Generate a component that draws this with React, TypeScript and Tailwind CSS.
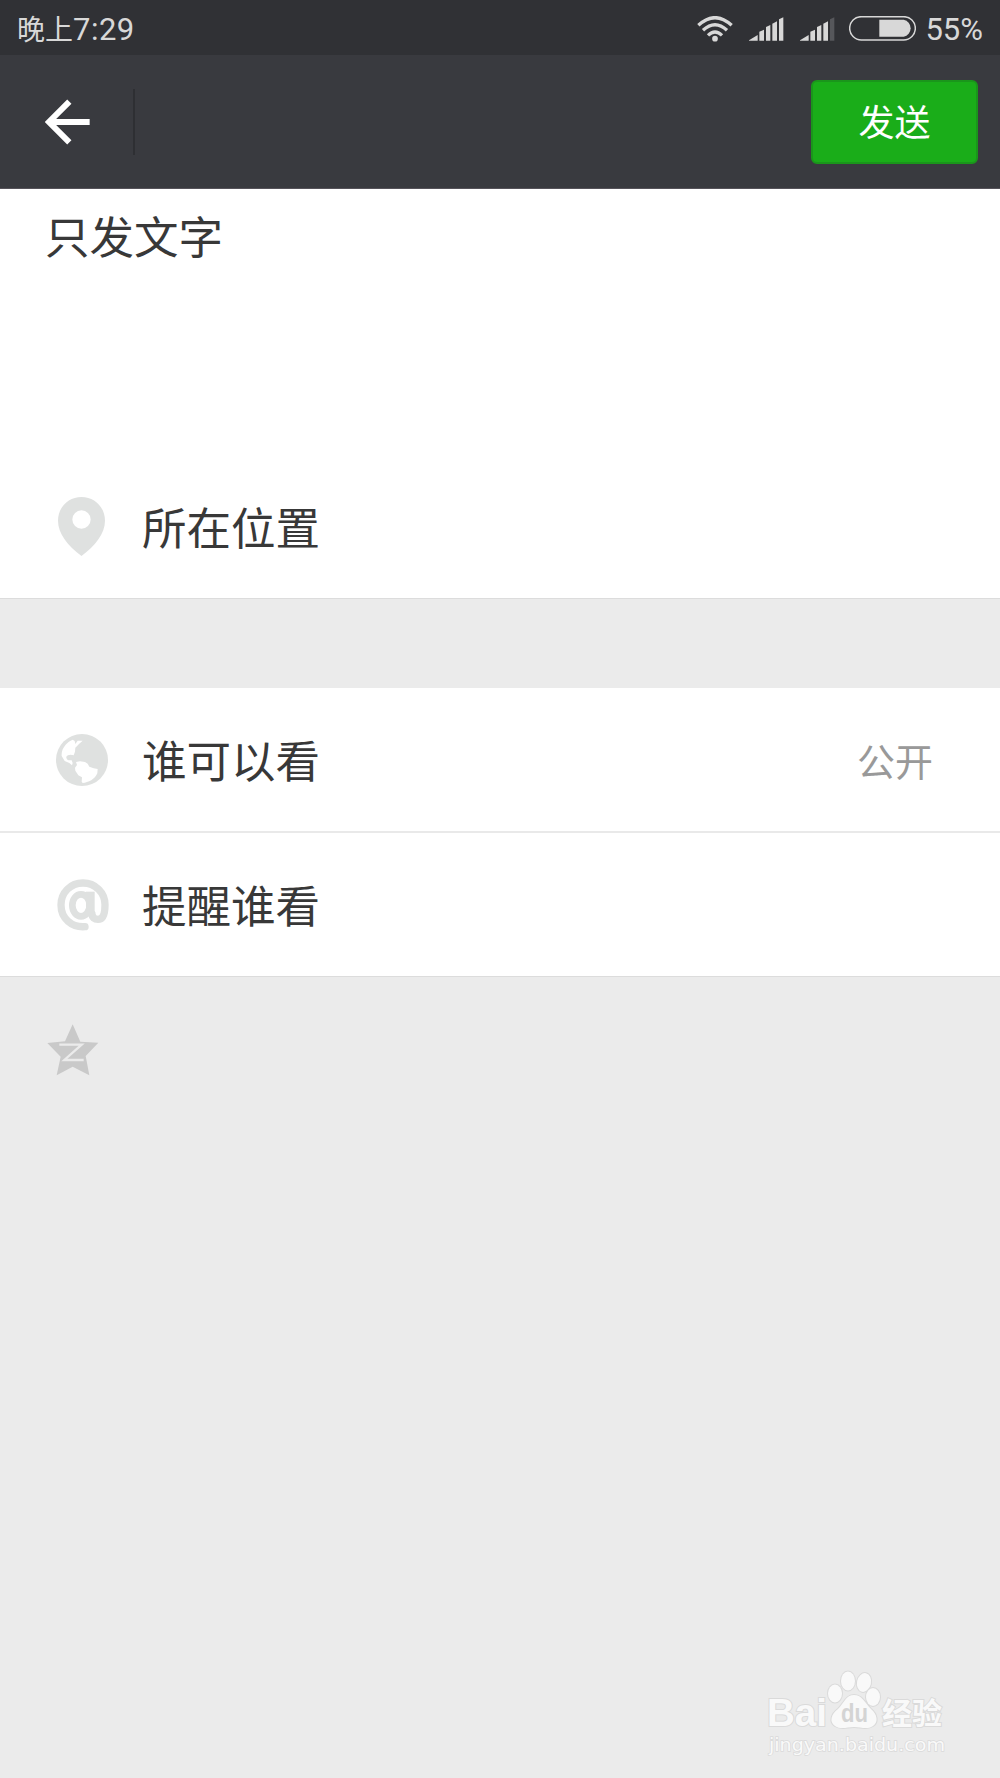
import type { ReactNode } from "react";

interface RowProps {
  icon: ReactNode;
  label: string;
  value?: string;
}

function WifiIcon() {
  return (
    <svg width="36" height="26" viewBox="0 0 108 78" fill="none" stroke="#d8d8d8" strokeWidth="10">
      <path d="M4 28Q54 -18 104 28" />
      <path d="M18 43Q54 10 90 43" />
      <path d="M33 58Q54 38 75 58" />
      <circle cx="54" cy="68" r="8.5" fill="#d8d8d8" stroke="none" />
    </svg>
  );
}

function SignalIcon({ weak = false }: { weak?: boolean }) {
  return (
    <svg width="35" height="24" viewBox="0 0 105 72" fill="#d8d8d8">
      <path d="M0 70L26 54V71H0z" />
      <path d="M31 44L45 38V71H31z" />
      <path d="M51 30L64 24V71H51z" />
      <path d="M70 20L84 13V71H70z" />
      <path d="M90 7L103 1V71H90z" fill={weak ? "#56575b" : "#d8d8d8"} />
    </svg>
  );
}

function BatteryIcon() {
  return (
    <svg width="67" height="25" viewBox="0 0 201 75">
      <rect x="2" y="2" width="197" height="70" rx="35" fill="none" stroke="#d8d8d8" strokeWidth="4.5" />
      <path d="M91 11H164A26 26 0 0 1 164 62H91z" fill="#d8d8d8" />
    </svg>
  );
}

function PinIcon() {
  return (
    <svg width="47" height="59" viewBox="0 0 141 177">
      <path
        fillRule="evenodd"
        fill="#dfe1e0"
        d="M70.500 0C31 0 0 31 0 71C0 109 29 146 70.500 177C112 146 141 109 141 71C141 31 110 0 70.500 0ZM70.500 40A27.500 27.500 0 1 1 70.500 95A27.500 27.500 0 1 1 70.500 40Z"
      />
    </svg>
  );
}

function GlobeIcon() {
  return (
    <svg width="52" height="52" viewBox="0 0 156 156">
      <circle cx="78" cy="78" r="78" fill="#dfe1e0" />
      <g fill="#fff">
        <path d="M50 17L56 21L58 30L65 20H80L69 30L58 41L57 53L53 64C44 60 34 62 31 68C30 73 34 78 38 79H47L50 87L48 94L40 87L26 81L17 66C16 53 20 43 29 32C35 25 42 20 50 17Z" />
        <path d="M42 67L50 65L55 73L56 82L48 78Z" fill="#dfe1e0" />
        <path d="M60 84L72 82L87 84L95 89L100 98L113 103L125 105L124 118C117 136 97 146 80 147L77 143L78 130L67 124L58 110L57 101L63 93Z" />
      </g>
    </svg>
  );
}

function MentionIcon() {
  return (
    <svg width="52" height="52" viewBox="0 0 156 156" fill="none" stroke="#dfe1e0" strokeLinecap="round">
      <path strokeWidth="22" d="M84 143C44 146 12 118 12 78C12 40 41 12 78 12C115 12 144 41 144 77C144 107 136 121 123 121C112 121 105 115 105 105" />
      <path strokeWidth="26" strokeLinecap="butt" d="M100 38V112" />
      <ellipse cx="72" cy="79" rx="26" ry="33" strokeWidth="20" />
    </svg>
  );
}

function QzoneIcon() {
  return (
    <svg width="52" height="52" viewBox="0 0 156 156">
      <path fill="#c9c9c9" d="M77 1L100 53L154 56L116 96L127 154L77 128L29 154L41 98L1 57L54 52Z" />
      <path d="M37 62H104L52 108H110" fill="none" stroke="#ebebeb" strokeWidth="7" />
    </svg>
  );
}

function Row({ icon, label, value }: RowProps) {
  return (
    <div className="flex h-[143px] items-center bg-white pr-[67px] pl-14">
      <div className="flex w-[86px] shrink-0">{icon}</div>
      <span className="flex-1 text-[44.5px] leading-none">{label}</span>
      {value && <span className="text-[38px] leading-none text-[#999]">{value}</span>}
    </div>
  );
}

function Watermark() {
  return (
    <svg
      className="absolute right-[50px] bottom-[16px]"
      width="184"
      height="96"
      viewBox="0 0 184 96"
      fill="#f9f9f9"
      stroke="#dadada"
      strokeWidth="2"
      paintOrder="stroke"
    >
      <text x="1" y="60" fontSize="38" fontWeight="bold" textLength="60" lengthAdjust="spacingAndGlyphs" fontFamily="'Liberation Sans', sans-serif">
        Bai
      </text>
      <ellipse cx="69" cy="27.500" rx="7" ry="9" />
      <ellipse cx="82" cy="15" rx="7" ry="9.500" />
      <ellipse cx="98" cy="16.500" rx="7" ry="9.500" transform="rotate(12 98 16.500)" />
      <ellipse cx="107" cy="31" rx="7" ry="9" />
      <path d="M88 29C96 29 99 37 105 43C111 48 113 56 107 60C101 64 95 61 88 61C81 61 75 64 69 60C63 56 65 48 72 43C78 37 80 29 88 29Z" />
      <text x="75" y="56" fontSize="25" fontWeight="bold" fill="#d4d4d4" stroke="none" textLength="27" lengthAdjust="spacingAndGlyphs" fontFamily="'Liberation Sans', sans-serif">
        du
      </text>
      <text x="116" y="58" fontSize="30" fontWeight="bold" textLength="60" lengthAdjust="spacingAndGlyphs" fontFamily="'Noto Sans CJK SC', sans-serif">
        经验
      </text>
      <text x="3" y="85" fontSize="18.500" strokeWidth="1.500" textLength="176" lengthAdjust="spacingAndGlyphs" fontFamily="'DejaVu Sans', sans-serif">
        jingyan.baidu.com
      </text>
    </svg>
  );
}

export default function App() {
  return (
    <div className="relative flex h-[1778px] w-[1000px] flex-col overflow-hidden bg-[#ebebeb] font-['Noto_Sans_CJK_SC',sans-serif] text-[#383838]">
      {/* Status bar */}
      <div className="flex h-[55px] shrink-0 items-center justify-between bg-[#303135] pt-0.5 pr-[17px] pl-[17px] text-[#d8d8d8]">
        <div className="flex items-baseline pt-px leading-none">
          <span className="text-[28px] leading-none">晚上</span>
          <span className="font-[Roboto,sans-serif] text-[31px] leading-none tracking-[0.5px]">7:29</span>
        </div>
        <div className="flex items-center">
          <WifiIcon />
          <div className="ml-4 flex gap-4">
            <SignalIcon />
            <SignalIcon weak />
          </div>
          <div className="mr-[9px] ml-[14px]">
            <BatteryIcon />
          </div>
          <span className="pt-px font-[Roboto,sans-serif] text-[31px] leading-none">55%</span>
        </div>
      </div>

      {/* Title bar */}
      <div className="flex h-[134px] shrink-0 items-center justify-between border-b border-[#56535a] bg-[#393a3f] pr-[22px]">
        <div className="flex h-[66px] w-[135px] items-center border-r-2 border-[#2e2f33] pl-[45px]">
          <svg width="45" height="46" viewBox="0 0 135 138" fill="none" stroke="#fff" strokeWidth="18">
            <path d="M134 69H16M73 8L12 69L73 130" />
          </svg>
        </div>
        <button className="flex h-[84px] w-[167px] items-center justify-center rounded-md border-2 border-[#1a961b] bg-[#1aad19] pb-1 text-[36px] leading-none text-white">
          发送
        </button>
      </div>

      {/* Post text and location */}
      <div className="flex h-[410px] shrink-0 flex-col justify-between border-b border-[#dcdcdc] bg-white">
        <p className="px-[45px] pt-6 text-[44.5px] leading-none">只发文字</p>
        <Row icon={<div className="pl-0.5"><PinIcon /></div>} label="所在位置" />
      </div>

      {/* Visibility and mentions */}
      <div className="mt-[89px] shrink-0 border-b border-[#dcdcdc]">
        <Row icon={<GlobeIcon />} label="谁可以看" value="公开" />
        <div className="h-0.5 bg-[#e9e9e9]" />
        <Row icon={<div className="pl-px"><MentionIcon /></div>} label="提醒谁看" />
      </div>

      <div className="px-[47px] pt-[47px]">
        <QzoneIcon />
      </div>

      <Watermark />
    </div>
  );
}
